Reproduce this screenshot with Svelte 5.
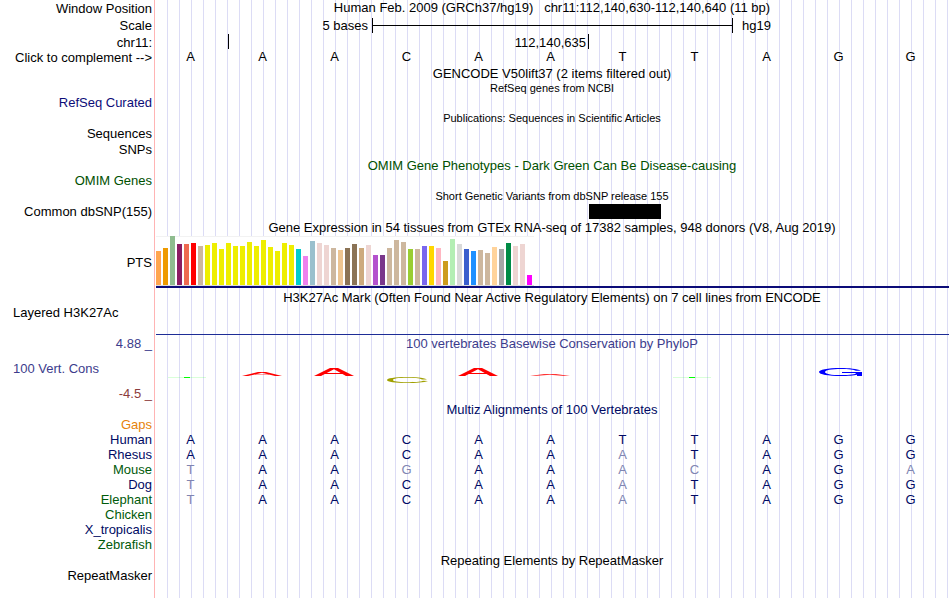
<script lang="ts">
	const SEQUENCE = 'AAACAATTAGG';
	const PAIRS: Record<string, string> = { A: 'T', T: 'A', C: 'G', G: 'C' };

	let complement = $state(false);

	const bases = $derived(
		SEQUENCE.split('').map((base) => (complement ? PAIRS[base] : base))
	);

	// Lower case marks a base that differs from the reference
	const species = [
		{ name: 'Human', tone: 'navy', seq: 'AAACAATTAGG' },
		{ name: 'Rhesus', tone: 'navy', seq: 'AAACAAaTAGG' },
		{ name: 'Mouse', tone: 'green', seq: 'tAAgAAacAGa' },
		{ name: 'Dog', tone: 'navy', seq: 'tAACAAaTAGG' },
		{ name: 'Elephant', tone: 'green', seq: 'tAACAAaTAGG' },
		{ name: 'Chicken', tone: 'green', seq: '' },
		{ name: 'X_tropicalis', tone: 'navy', seq: '' },
		{ name: 'Zebrafish', tone: 'green', seq: '' }
	];

	const YELLOW = '#eeee00';
	const TAN = '#cdb79e';
	const ROSE = '#eed5d2';

	const tissues: [number, string][] = [
		[34, '#ffa54f'],
		[37, '#ee9a00'],
		[49, '#8fbc8f'],
		[41, '#8b1c62'],
		[41, '#ee6a50'],
		[42, '#ff0000'],
		[39, TAN],
		[40, YELLOW],
		[42, YELLOW],
		[36, YELLOW],
		[42, YELLOW],
		[39, YELLOW],
		[39, YELLOW],
		[43, YELLOW],
		[39, YELLOW],
		[45, YELLOW],
		[38, YELLOW],
		[34, YELLOW],
		[42, YELLOW],
		[40, YELLOW],
		[36, '#00cdcd'],
		[29, '#ee82ee'],
		[44, '#9ac0cd'],
		[42, ROSE],
		[40, ROSE],
		[37, TAN],
		[35, '#eec591'],
		[37, '#8b7355'],
		[41, '#8b7355'],
		[37, '#cdaa7d'],
		[40, ROSE],
		[30, '#b452cd'],
		[30, '#7a378b'],
		[37, TAN],
		[45, TAN],
		[43, TAN],
		[36, '#9acd32'],
		[36, TAN],
		[39, '#7a67ee'],
		[39, '#ffd700'],
		[37, '#ffb6c1'],
		[24, '#cd9b1d'],
		[46, '#b4eeb4'],
		[41, '#d9d9d9'],
		[36, '#3a5fcd'],
		[34, '#1e90ff'],
		[35, TAN],
		[32, TAN],
		[38, '#ffd39b'],
		[36, '#a6a6a6'],
		[42, '#008b45'],
		[39, ROSE],
		[41, ROSE],
		[10, '#ff00ff']
	];
</script>

<main class="browser">
	<div class="row">
		<span class="label">Window Position</span>
		<h1 class="title">Human Feb. 2009 (GRCh37/hg19) &nbsp; chr11:112,140,630-112,140,640 (11 bp)</h1>
	</div>
	<div class="row scale">
		<span class="label">Scale</span>
		<div class="bases">
			<span class="scale-size">5 bases</span>
			<span class="scale-bar"></span>
			<span class="scale-db">hg19</span>
		</div>
	</div>
	<div class="row">
		<span class="label">chr11:</span>
		<div class="bases ticks">
			<span class="tick tick-text">112,140,635</span>
			<span class="tick"></span>
		</div>
	</div>
	<div class="row short">
		<button class="label" type="button" onclick={() => (complement = !complement)}>
			Click to complement --&gt;
		</button>
		<div class="bases">
			{#each bases as base}
				<span class="base">{base}</span>
			{/each}
		</div>
	</div>

	<div class="row"><h2 class="title">GENCODE V50lift37 (2 items filtered out)</h2></div>
	<div class="row tight"><h2 class="title small">RefSeq genes from NCBI</h2></div>
	<div class="row short"><span class="label blue">RefSeq Curated</span></div>
	<div class="row"><h2 class="title small">Publications: Sequences in Scientific Articles</h2></div>
	<div class="row short"><span class="label">Sequences</span></div>
	<div class="row"><span class="label">SNPs</span></div>
	<div class="row">
		<h2 class="title omim">OMIM Gene Phenotypes - Dark Green Can Be Disease-causing</h2>
	</div>
	<div class="row short"><span class="label omim">OMIM Genes</span></div>
	<div class="row"><h2 class="title small">Short Genetic Variants from dbSNP release 155</h2></div>
	<div class="row short">
		<span class="label">Common dbSNP(155)</span>
		<div class="bases"><span class="snp"></span></div>
	</div>

	<div class="row tall">
		<h2 class="title">
			Gene Expression in 54 tissues from GTEx RNA-seq of 17382 samples, 948 donors (V8, Aug 2019)
		</h2>
	</div>
	<div class="row expression">
		<span class="label">PTS</span>
		<div class="gene">
			<div class="bars">
				{#each tissues as [height, color]}
					<span class="bar" style="height: {height}px; background: {color}"></span>
				{/each}
			</div>
		</div>
	</div>

	<div class="row">
		<h2 class="title">
			H3K27Ac Mark (Often Found Near Active Regulatory Elements) on 7 cell lines from ENCODE
		</h2>
	</div>
	<div class="row histone">
		<span class="label wide">Layered H3K27Ac</span>
		<div class="signal"></div>
	</div>

	<div class="row">
		<span class="label cons">4.88 _</span>
		<h2 class="title cons">100 vertebrates Basewise Conservation by PhyloP</h2>
	</div>
	<div class="row phylop">
		<span class="label wide cons">100 Vert. Cons</span>
		<svg class="logo" viewBox="0 0 792 34" preserveAspectRatio="none" aria-hidden="true">
			<g fill="#00ff00">
				<rect x="12" y="25" width="38" height="1" opacity="0.15" />
				<rect x="28" y="25" width="6" height="1" />
				<rect x="517" y="25" width="38" height="1" opacity="0.15" />
				<rect x="533" y="25" width="6" height="1" />
			</g>
			<g fill="#ff0000">
				<path d="M86 24 L102 20 H110 L126 24 H119 L106 20.8 L92 24 Z" />
				<path d="M99 22.2 H113 V22.8 H99 Z" opacity="0.6" />
				<path d="M158 24 L174 16 H182 L198 24 H190 L178 17.2 L165 24 Z" />
				<path d="M169 21 H187 V22 H169 Z" />
				<path d="M302 24 L318 16 H326 L342 24 H334 L322 17.2 L309 24 Z" />
				<path d="M313 21 H331 V22 H313 Z" />
				<path d="M374 24 L388 22 H400 L414 24 H408 L394 22.7 L379 24 Z" opacity="0.8" />
			</g>
			<path
				fill="#a0a000"
				d="M271 27.4 C267 25.5 259 25 251 25 C238 25 231 26.4 231 28 C231 29.8 239 31 251 31 C260 31 268 30.4 272 29 L267 28.8 C264 30 258 30.2 251 30.2 C242 30.2 237 29.4 237 28 C237 26.6 242 25.8 251 25.8 C258 25.8 263 26.2 266 27.4 Z"
			/>
			<path
				fill="#0000ff"
				d="M705 18.8 C701 16.8 693 16 685 16 C671 16 663 17.8 663 20 C663 22.4 672 24 685 24 C692 24 698 23.6 701 22.8 V24 H706 V20 H686 V21 H700 C700 22.4 694 23.1 685 23.1 C675 23.1 669 22 669 20 C669 18 675 16.9 685 16.9 C693 16.9 698 17.5 700 18.8 Z"
			/>
		</svg>
	</div>
	<div class="row short"><span class="label cons-low">-4.5 _</span></div>

	<div class="row"><h2 class="title navy">Multiz Alignments of 100 Vertebrates</h2></div>
	<div class="row short"><span class="label gaps">Gaps</span></div>
	<table class="alignment">
		<tbody>
			{#each species as s}
				<tr>
					<th scope="row" class={s.tone}>{s.name}</th>
					{#each SEQUENCE as _, i}
						{@const base = s.seq[i] ?? ''}
						<td class:mismatch={base !== base.toUpperCase()}>{base.toUpperCase()}</td>
					{/each}
				</tr>
			{/each}
		</tbody>
	</table>

	<div class="row"><h2 class="title">Repeating Elements by RepeatMasker</h2></div>
	<div class="row tight"><span class="label">RepeatMasker</span></div>
</main>

<style>
	:global(body) {
		margin: 0;
		background: #fff;
	}

	.browser {
		box-sizing: border-box;
		min-height: 100vh;
		padding-right: 2px;
		font-family: 'Liberation Sans', Arial, sans-serif;
		font-size: 13px;
		line-height: 15px;
		color: #000;
		/* label column with its red edge, then six guide lines per base */
		background:
			linear-gradient(to right, #fff 154px, #ffb4b4 154px, #ffb4b4 155px, #fff 155px) 0 0 / 156px
				100% no-repeat content-box,
			linear-gradient(to right, transparent calc(100% - 1px), #dcdcf5 calc(100% - 1px)) 156px 0 /
				calc((100% - 156px) / 66) 100% repeat-x content-box;
	}

	.row {
		display: grid;
		grid-template-columns: 156px minmax(0, 1fr);
		align-items: center;
		min-height: 16px;
	}

	.tight {
		min-height: 14px;
	}

	.short {
		min-height: 15px;
	}

	.tall {
		min-height: 17px;
	}

	.scale {
		min-height: 18px;
	}

	.label {
		padding: 0 4px 0 0;
		text-align: right;
		white-space: nowrap;
	}

	button.label {
		border: 0;
		background: none;
		font: inherit;
		color: inherit;
		cursor: pointer;
	}

	.wide {
		padding-left: 13px;
		text-align: left;
	}

	.title {
		grid-column: 2;
		margin: 0;
		font-size: 13px;
		font-weight: 400;
		text-align: center;
		white-space: nowrap;
	}

	h1.title {
		line-height: 14px;
	}

	.small {
		font-size: 11px;
		line-height: 14px;
	}

	.bases {
		display: grid;
		grid-template-columns: repeat(11, minmax(0, 1fr));
		align-self: stretch;
		align-items: center;
	}

	.base {
		align-self: start;
		padding-right: 3px;
		line-height: 13px;
		text-align: center;
	}

	.scale-size {
		grid-column: span 3;
		padding-right: 4px;
		text-align: right;
	}

	.scale-bar {
		grid-column: span 5;
		height: 15px;
		margin-right: -1px;
		border: solid #000;
		border-width: 0 1px;
		background: linear-gradient(#000, #000) center / 100% 1px no-repeat;
	}

	.scale-db {
		grid-column: span 3;
		padding-left: 10px;
	}

	.ticks {
		align-items: start;
	}

	.tick {
		grid-column: 7;
		height: 15px;
		border-left: 1px solid #000;
		line-height: 17px;
	}

	.tick-text {
		grid-column: 2 / 7;
		padding-right: 2px;
		text-align: right;
	}

	.snp {
		grid-column: 7;
		height: 15px;
		margin: 0 -1px 0 1px;
		background: #000;
	}

	.expression {
		min-height: 53px;
	}

	.gene {
		align-self: start;
		margin-right: -1px;
		border-bottom: 2px solid #0c0c78;
	}

	.bars {
		display: flex;
		align-items: flex-end;
		gap: 2px;
		width: fit-content;
		height: 49px;
		padding-right: 2px;
		border-bottom: 1px solid #dcdcdc;
		background: linear-gradient(#f2f2f2, #f2f2f2) top / 100% 1px no-repeat #fff;
	}

	.bar {
		width: 5px;
	}

	.histone {
		align-items: start;
		min-height: 30px;
	}

	.signal {
		align-self: end;
		height: 1px;
		margin-right: -1px;
		background: #1e2d96;
	}

	.phylop {
		min-height: 35px;
	}

	.logo {
		display: block;
		align-self: end;
		width: 100%;
		height: 34px;
	}

	.alignment {
		width: 100%;
		table-layout: fixed;
		border-collapse: collapse;
		color: #000a64;
	}

	.alignment th {
		width: 152px;
		padding: 0 4px 0 0;
		font-weight: 400;
		text-align: right;
	}

	.alignment td {
		height: 15px;
		padding: 0 3px 0 0;
		text-align: center;
	}

	.alignment .mismatch {
		color: #8085b2;
	}

	.blue {
		color: #0c0c78;
	}

	.omim {
		color: #005000;
	}

	.navy {
		color: #000a64;
	}

	.green {
		color: #005a0a;
	}

	.cons {
		color: #3c3c8c;
	}

	.cons-low {
		color: #8c3c3c;
	}

	.gaps {
		color: #e6820a;
	}
</style>
